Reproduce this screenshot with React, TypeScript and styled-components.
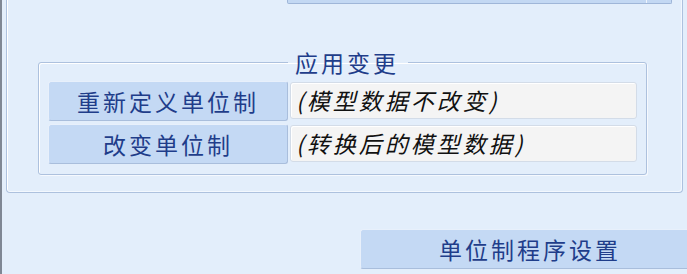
import React from 'react'
import styled, { createGlobalStyle } from 'styled-components'

const GlobalStyle = createGlobalStyle`
  html, body {
    margin: 0;
    padding: 0;
    background: #e3eefb;
  }
  * {
    box-sizing: border-box;
  }
`

const font = `"Noto Sans CJK SC", "Noto Sans", sans-serif`

const rows = [
  { action: '重新定义单位制', note: '(模型数据不改变)' },
  { action: '改变单位制', note: '(转换后的模型数据)' },
]

export default function App() {
  return (
    <>
      <GlobalStyle />
      <Page>
        <Column>
          <Panel>
            <Combo>
              <ComboField />
              <ComboArrow />
            </Combo>
            <GroupBox>
              <Legend>应用变更</Legend>
              <Rows>
                {rows.map(r => (
                  <React.Fragment key={r.action}>
                    <ActionButton>{r.action}</ActionButton>
                    <NoteField>{r.note}</NoteField>
                  </React.Fragment>
                ))}
              </Rows>
            </GroupBox>
          </Panel>
          <SettingsButton>单位制程序设置</SettingsButton>
        </Column>
      </Page>
    </>
  )
}

const Page = styled.div`
  width: 687px;
  height: 274px;
  overflow: hidden;
  display: flex;
  background: #e3eefb;
  border-left: 2px solid #7f8794;
  font-family: ${font};
`

const Column = styled.div`
  flex: 1;
  display: flex;
  flex-direction: column;
`

const Panel = styled.div`
  margin-left: 4px;
  width: 677px;
  height: 193px;
  border: 1px solid #adc1de;
  border-top: none;
  border-radius: 0 0 4px 4px;
  box-shadow: inset 1px 0 0 #ffffff, inset -1px -1px 0 #f3f8fe;
  display: flex;
  flex-direction: column;
`

const Combo = styled.div`
  margin-left: 280px;
  width: 385px;
  height: 4px;
  display: flex;
  background: #c3d8f3;
  border: 1px solid #9fb6d8;
  border-top: none;
  border-radius: 0 0 2px 2px;
`

const ComboField = styled.div`
  flex: 1;
`

const ComboArrow = styled.div`
  width: 25px;
  border-left: 1px solid #eef4fc;
`

const GroupBox = styled.fieldset`
  margin: 45px 0 0 31px;
  width: 609px;
  padding: 6px 9px 10px 9px;
  border: 1px solid #adc1de;
  border-radius: 3px;
  box-shadow: inset 1px 1px 0 #ffffff, 1px 1px 0 #f6f9fe;
`

const Legend = styled.legend`
  margin-left: 240px;
  padding: 0 9px 0 7px;
  font-size: 23px;
  line-height: 26px;
  letter-spacing: 3px;
  color: #1f3d8a;
`

const Rows = styled.div`
  display: grid;
  grid-template-columns: 240px 347px;
  column-gap: 2px;
  row-gap: 3px;
`

const ActionButton = styled.div`
  height: 40px;
  line-height: 38px;
  text-align: center;
  font-size: 23px;
  letter-spacing: 3px;
  color: #1f3d8a;
  background: #c4d9f4;
  border: 1px solid #a9bedc;
  border-top-color: #e8f0fb;
  border-left-color: #e8f0fb;
  border-radius: 3px;
`

const NoteField = styled.div`
  margin-top: 1px;
  height: 37px;
  line-height: 35px;
  padding-left: 5px;
  font-size: 23px;
  font-style: italic;
  letter-spacing: 3px;
  color: #111111;
  background: #f4f4f4;
  border: 1px solid #d3dce8;
  border-radius: 3px;
  box-shadow: inset 1px 1px 0 #ffffff;
`

const SettingsButton = styled.div`
  margin: 36px 0 0 358px;
  width: 340px;
  height: 40px;
  line-height: 38px;
  text-align: center;
  font-size: 23px;
  letter-spacing: 3px;
  color: #1f3d8a;
  background: #c4d9f4;
  border: 1px solid #a9bedc;
  border-top-color: #e8f0fb;
  border-left-color: #e8f0fb;
  border-radius: 3px;
`
